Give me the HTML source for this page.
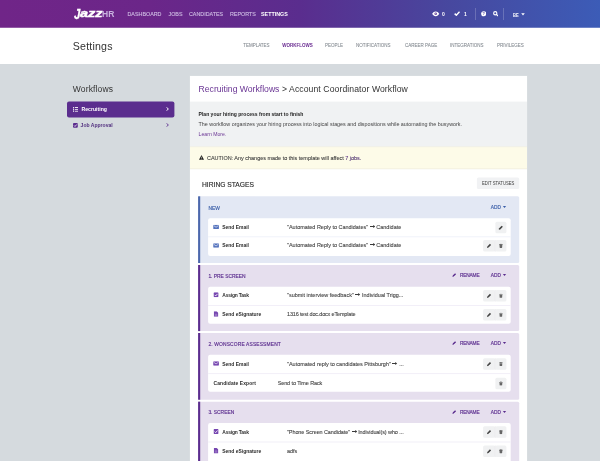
<!DOCTYPE html>
<html><head><meta charset="utf-8">
<style>
*{box-sizing:border-box;margin:0;padding:0}
html,body{width:600px;height:461px;overflow:hidden;background:#d5dade;font-family:"Liberation Sans",sans-serif;color:#333}
.abs{position:absolute}
#txt{position:absolute;left:0;top:0;width:600px;height:461px;will-change:transform}
#hdr{position:absolute;left:0;top:0;width:600px;height:28px}
#sub{position:absolute;left:0;top:27.700px;width:600px;height:36.200px}
.nav{position:absolute;top:11px;font-size:5.360px;color:#cdb9e2;white-space:nowrap;line-height:6px;-webkit-text-stroke:.12px #cdb9e2}
.nav.on{color:#fff;font-weight:bold;-webkit-text-stroke:0}
.tab{position:absolute;top:43.300px;font-size:4.500px;color:#7f858c;white-space:nowrap;line-height:5px;-webkit-text-stroke:.06px #7f858c}
.tab.on{color:#6a2c91;font-weight:bold;-webkit-text-stroke:0}
.t{position:absolute;white-space:nowrap}
.sh{position:absolute;font-size:4.900px;line-height:7px;color:#5b2d8e;white-space:nowrap;-webkit-text-stroke:.15px #5b2d8e}
.sh.new{color:#3b5ea8;-webkit-text-stroke-color:#3b5ea8}
.lbl{position:absolute;font-size:4.950px;line-height:7px;font-weight:bold;color:#2d2d2d;white-space:nowrap}
.val{position:absolute;font-size:5.470px;line-height:7px;color:#444;-webkit-text-stroke:.1px #444;white-space:nowrap}
.act{position:absolute;font-size:4.800px;line-height:7px;color:#5b2d8e;white-space:nowrap;-webkit-text-stroke:.15px #5b2d8e}
.act.new{color:#3b5ea8;-webkit-text-stroke-color:#3b5ea8}
.arr{display:inline-block;width:5.200px;height:3px;vertical-align:.35px}
</style></head><body>
<svg class="abs" style="left:0;top:0" width="600" height="461" viewBox="0 0 600 461">
<defs><linearGradient id="g" x1="0" x2="1" y1="0" y2="0"><stop offset="0" stop-color="#702588"/><stop offset=".25" stop-color="#6b2689"/><stop offset=".5" stop-color="#5a2d8e"/><stop offset=".75" stop-color="#47489f"/><stop offset="1" stop-color="#3c5cb7"/></linearGradient></defs>
<rect x="0" y="0" width="600" height="64" fill="#fff"/>
<rect x="0" y="0" width="600" height="27.750" fill="url(#g)"/>
<rect x="189.600" y="75.600" width="337.800" height="390" fill="#dde1e4"/>
<rect x="190" y="76" width="337" height="390" fill="#fff"/>
<rect x="190" y="101.600" width="337" height="44.900" fill="#f0f2f3"/>
<rect x="190" y="146.500" width="337" height="22.700" fill="#ebe9da"/>
<rect x="190" y="147.100" width="337" height="21.500" fill="#fdfbe8"/>
<rect x="67" y="101.600" width="107.400" height="15.800" rx="2" fill="#5b2d8e"/>
<rect x="476.900" y="177.600" width="42.300" height="11.500" rx="1.500" fill="#f1f2f4"/>
<rect x="198.10" y="196.30" width="321.10" height="66.70" rx="1.5" fill="#e3e8f4"/><rect x="198.10" y="196.30" width="2.10" height="66.70" rx="0" fill="#4c68ac"/><rect x="208.10" y="218.30" width="302.60" height="37.70" rx="2" fill="#fff"/><rect x="208.10" y="236.30" width="302.60" height="1.00" rx="0" fill="#f0f2fa"/><path d="M502.900 206.10h3.200l-1.600 2z" fill="#3b5ea8"/><rect x="495.40" y="221.85" width="11.00" height="11.50" rx="1.5" fill="#f0f1f2"/><svg x="498.40" y="225.10" width="5.00" height="5.00" viewBox="0 0 10 10"><path d="M0.600 9.400l.8-3.100L6.600 1.100l2.300 2.300-5.200 5.200z" fill="#454545"/></svg><svg x="213.15" y="224.65" width="5.8" height="4.3" viewBox="0 0 12 9" preserveAspectRatio="none"><rect width="12" height="9" rx="1.200" fill="#5573bd"/><path d="M1.200 2l4.800 3.400L10.800 2" stroke="#fff" stroke-width="1.300" fill="none"/></svg><rect x="483.10" y="240.05" width="12.10" height="11.50" rx="1.5" fill="#f0f1f2"/><rect x="494.80" y="240.05" width="0.80" height="11.50" rx="0" fill="#e4e5e8"/><svg x="486.65" y="243.30" width="5.00" height="5.00" viewBox="0 0 10 10"><path d="M0.600 9.400l.8-3.100L6.600 1.100l2.300 2.300-5.200 5.200z" fill="#454545"/></svg><rect x="495.40" y="240.05" width="11.00" height="11.50" rx="1.5" fill="#f0f1f2"/><svg x="498.60" y="243.50" width="4.60" height="4.60" viewBox="0 0 10 10"><path d="M1 1.800h8v1.200H1zM3.600 .7h2.800v1.200H3.600zM1.900 3.500h6.200l-.4 5.300q-.1 .8-.9 .8H3.200q-.8 0-.9-.8z" fill="#666"/></svg><svg x="213.15" y="243.35" width="5.8" height="4.3" viewBox="0 0 12 9" preserveAspectRatio="none"><rect width="12" height="9" rx="1.200" fill="#5573bd"/><path d="M1.200 2l4.800 3.400L10.800 2" stroke="#fff" stroke-width="1.300" fill="none"/></svg><rect x="198.10" y="265.00" width="321.10" height="66.10" rx="1.5" fill="#e6dfee"/><rect x="198.10" y="265.00" width="2.10" height="66.10" rx="0" fill="#5b2d8e"/><rect x="208.10" y="286.70" width="302.60" height="37.00" rx="2" fill="#fff"/><rect x="208.10" y="305.00" width="302.60" height="1.00" rx="0" fill="#f2eff8"/><svg x="452.10" y="272.70" width="4.50" height="4.50" viewBox="0 0 10 10"><path d="M0.600 9.400l.8-3.100L6.600 1.100l2.300 2.300-5.200 5.200z" fill="#5b2d8e"/></svg><path d="M502.900 274.10h3.200l-1.600 2z" fill="#5b2d8e"/><rect x="483.10" y="290.00" width="12.10" height="11.50" rx="1.5" fill="#f0f1f2"/><rect x="494.80" y="290.00" width="0.80" height="11.50" rx="0" fill="#e4e5e8"/><svg x="486.65" y="293.25" width="5.00" height="5.00" viewBox="0 0 10 10"><path d="M0.600 9.400l.8-3.100L6.600 1.100l2.300 2.300-5.200 5.200z" fill="#454545"/></svg><rect x="495.40" y="290.00" width="11.00" height="11.50" rx="1.5" fill="#f0f1f2"/><svg x="498.60" y="293.45" width="4.60" height="4.60" viewBox="0 0 10 10"><path d="M1 1.800h8v1.200H1zM3.600 .7h2.800v1.200H3.600zM1.900 3.500h6.200l-.4 5.300q-.1 .8-.9 .8H3.200q-.8 0-.9-.8z" fill="#666"/></svg><svg x="213.50" y="292.25" width="5.1" height="5.1" viewBox="0 0 10 10"><rect width="10" height="10" rx="2" fill="#7646b0"/><path d="M2.300 5.200l2 2L7.900 3.100" stroke="#fff" stroke-width="1.700" fill="none"/></svg><rect x="483.10" y="309.00" width="12.10" height="11.50" rx="1.5" fill="#f0f1f2"/><rect x="494.80" y="309.00" width="0.80" height="11.50" rx="0" fill="#e4e5e8"/><svg x="486.65" y="312.25" width="5.00" height="5.00" viewBox="0 0 10 10"><path d="M0.600 9.400l.8-3.100L6.600 1.100l2.300 2.300-5.200 5.200z" fill="#454545"/></svg><rect x="495.40" y="309.00" width="11.00" height="11.50" rx="1.5" fill="#f0f1f2"/><svg x="498.60" y="312.45" width="4.60" height="4.60" viewBox="0 0 10 10"><path d="M1 1.800h8v1.200H1zM3.600 .7h2.800v1.200H3.600zM1.900 3.500h6.200l-.4 5.300q-.1 .8-.9 .8H3.200q-.8 0-.9-.8z" fill="#666"/></svg><svg x="213.75" y="311.25" width="4.6" height="5.5" viewBox="0 0 8 10" preserveAspectRatio="none"><path d="M0 0h5L8 3V10H0z" fill="#7646b0"/><path d="M1.800 5.500h4.400M1.800 7.500h4.400" stroke="#fff" stroke-opacity=".55" stroke-width=".9"/></svg><rect x="198.10" y="333.00" width="321.10" height="66.75" rx="1.5" fill="#e6dfee"/><rect x="198.10" y="333.00" width="2.10" height="66.75" rx="0" fill="#5b2d8e"/><rect x="208.10" y="354.70" width="302.60" height="37.10" rx="2" fill="#fff"/><rect x="208.10" y="373.10" width="302.60" height="1.00" rx="0" fill="#f2eff8"/><svg x="452.10" y="340.70" width="4.50" height="4.50" viewBox="0 0 10 10"><path d="M0.600 9.400l.8-3.100L6.600 1.100l2.300 2.300-5.200 5.200z" fill="#5b2d8e"/></svg><path d="M502.900 342.10h3.200l-1.600 2z" fill="#5b2d8e"/><rect x="483.10" y="358.25" width="12.10" height="11.50" rx="1.5" fill="#f0f1f2"/><rect x="494.80" y="358.25" width="0.80" height="11.50" rx="0" fill="#e4e5e8"/><svg x="486.65" y="361.50" width="5.00" height="5.00" viewBox="0 0 10 10"><path d="M0.600 9.400l.8-3.100L6.600 1.100l2.300 2.300-5.200 5.200z" fill="#454545"/></svg><rect x="495.40" y="358.25" width="11.00" height="11.50" rx="1.5" fill="#f0f1f2"/><svg x="498.60" y="361.70" width="4.60" height="4.60" viewBox="0 0 10 10"><path d="M1 1.800h8v1.200H1zM3.600 .7h2.800v1.200H3.600zM1.900 3.500h6.200l-.4 5.300q-.1 .8-.9 .8H3.200q-.8 0-.9-.8z" fill="#666"/></svg><svg x="213.15" y="361.35" width="5.8" height="4.3" viewBox="0 0 12 9" preserveAspectRatio="none"><rect width="12" height="9" rx="1.200" fill="#7646b0"/><path d="M1.200 2l4.800 3.400L10.800 2" stroke="#fff" stroke-width="1.300" fill="none"/></svg><rect x="495.40" y="377.65" width="11.00" height="11.50" rx="1.5" fill="#f0f1f2"/><svg x="498.60" y="381.10" width="4.60" height="4.60" viewBox="0 0 10 10"><path d="M1 1.800h8v1.200H1zM3.600 .7h2.800v1.200H3.600zM1.900 3.500h6.200l-.4 5.300q-.1 .8-.9 .8H3.200q-.8 0-.9-.8z" fill="#666"/></svg><rect x="198.10" y="401.65" width="321.10" height="66.65" rx="1.5" fill="#e6dfee"/><rect x="198.10" y="401.65" width="2.10" height="66.65" rx="0" fill="#5b2d8e"/><rect x="208.10" y="422.90" width="302.60" height="40.10" rx="2" fill="#fff"/><rect x="208.10" y="441.50" width="302.60" height="1.00" rx="0" fill="#f2eff8"/><svg x="452.10" y="409.70" width="4.50" height="4.50" viewBox="0 0 10 10"><path d="M0.600 9.400l.8-3.100L6.600 1.100l2.300 2.300-5.200 5.200z" fill="#5b2d8e"/></svg><path d="M502.900 411.10h3.200l-1.600 2z" fill="#5b2d8e"/><rect x="483.10" y="426.30" width="12.10" height="11.50" rx="1.5" fill="#f0f1f2"/><rect x="494.80" y="426.30" width="0.80" height="11.50" rx="0" fill="#e4e5e8"/><svg x="486.65" y="429.55" width="5.00" height="5.00" viewBox="0 0 10 10"><path d="M0.600 9.400l.8-3.100L6.600 1.100l2.300 2.300-5.200 5.200z" fill="#454545"/></svg><rect x="495.40" y="426.30" width="11.00" height="11.50" rx="1.5" fill="#f0f1f2"/><svg x="498.60" y="429.75" width="4.60" height="4.60" viewBox="0 0 10 10"><path d="M1 1.800h8v1.200H1zM3.600 .7h2.800v1.200H3.600zM1.900 3.500h6.200l-.4 5.300q-.1 .8-.9 .8H3.200q-.8 0-.9-.8z" fill="#666"/></svg><svg x="213.50" y="428.95" width="5.1" height="5.1" viewBox="0 0 10 10"><rect width="10" height="10" rx="2" fill="#7646b0"/><path d="M2.300 5.200l2 2L7.900 3.100" stroke="#fff" stroke-width="1.700" fill="none"/></svg><rect x="483.10" y="445.55" width="12.10" height="11.50" rx="1.5" fill="#f0f1f2"/><rect x="494.80" y="445.55" width="0.80" height="11.50" rx="0" fill="#e4e5e8"/><svg x="486.65" y="448.80" width="5.00" height="5.00" viewBox="0 0 10 10"><path d="M0.600 9.400l.8-3.100L6.600 1.100l2.300 2.300-5.200 5.200z" fill="#454545"/></svg><rect x="495.40" y="445.55" width="11.00" height="11.50" rx="1.5" fill="#f0f1f2"/><svg x="498.60" y="449.00" width="4.60" height="4.60" viewBox="0 0 10 10"><path d="M1 1.800h8v1.200H1zM3.600 .7h2.800v1.200H3.600zM1.900 3.500h6.200l-.4 5.300q-.1 .8-.9 .8H3.200q-.8 0-.9-.8z" fill="#666"/></svg><svg x="213.75" y="447.95" width="4.6" height="5.5" viewBox="0 0 8 10" preserveAspectRatio="none"><path d="M0 0h5L8 3V10H0z" fill="#7646b0"/><path d="M1.800 5.500h4.400M1.800 7.500h4.400" stroke="#fff" stroke-opacity=".55" stroke-width=".9"/></svg>
</svg>
<div id="txt">
<div id="hdr">
  <div class="t" style="left:0;top:0;font-weight:bold;font-style:italic;color:#fff"><span class="abs" style="left:73.700px;top:5.800px;font-size:14.500px;line-height:16px;transform:scaleX(.78);transform-origin:0 0;-webkit-text-stroke:.3px #fff">J</span><span class="abs" style="left:80px;top:7.200px;font-size:10.800px;line-height:12px;transform:scaleX(1.340);transform-origin:0 0;-webkit-text-stroke:.45px #fff">azz</span></div>
  <div class="t" style="left:102.200px;top:8.900px;font-size:8.900px;line-height:10px;font-weight:bold;color:#c9b3df;transform:scaleX(.96);transform-origin:0 0">HR</div>
  <div class="nav" style="left:127.500px">DASHBOARD</div>
  <div class="nav" style="left:168.500px">JOBS</div>
  <div class="nav" style="left:189px">CANDIDATES</div>
  <div class="nav" style="left:230px">REPORTS</div>
  <div class="nav on" style="left:261px">SETTINGS</div>
  <svg class="abs" style="left:432.300px;top:11.200px" width="7.400" height="5.600" viewBox="0 0 16 12"><path d="M8 .8C4 .8 1.300 4 .3 6c1 2 3.700 5.200 7.700 5.200S14.700 8 15.700 6C14.700 4 12 .8 8 .8z" fill="#fff"/><circle cx="8" cy="6" r="2.700" fill="#5a3596"/><circle cx="8" cy="6" r="1.100" fill="#fff"/></svg>
  <div class="t" style="left:442px;top:11px;font-size:5px;line-height:6px;color:#fff;font-weight:bold">0</div>
  <svg class="abs" style="left:454.300px;top:11.400px" width="6.200" height="5" viewBox="0 0 12.400 10"><path d="M1.300 5.200l3.400 3.200L11.100 1.600" stroke="#fff" stroke-width="2.900" fill="none"/></svg>
  <div class="t" style="left:464px;top:11px;font-size:5px;line-height:6px;color:#fff;font-weight:bold">1</div>
  <div class="abs" style="left:475.200px;top:8px;width:.8px;height:11.600px;background:rgba(255,255,255,.2)"></div>
  <svg class="abs" style="left:480.800px;top:11.300px" width="5.400" height="5.400" viewBox="0 0 12 12"><circle cx="6" cy="6" r="5.700" fill="#fff"/><text x="6" y="9.200" font-size="8.500" font-weight="bold" text-anchor="middle" fill="#4b3f9f" font-family="Liberation Sans">?</text></svg>
  <svg class="abs" style="left:492.800px;top:11.300px" width="5.400" height="5.400" viewBox="0 0 12 12"><circle cx="5" cy="5" r="3.600" stroke="#fff" stroke-width="2.500" fill="none"/><path d="M7.600 7.600L11.200 11.200" stroke="#fff" stroke-width="2.800"/></svg>
  <div class="abs" style="left:503.200px;top:8px;width:.8px;height:11.600px;background:rgba(255,255,255,.2)"></div>
  <div class="t" style="left:513px;top:11.800px;font-size:5.200px;line-height:6px;color:#fff;font-weight:bold;transform:scaleX(.78);transform-origin:0 0">BE</div>
  <svg class="abs" style="left:520.800px;top:13.300px" width="4" height="3" viewBox="0 0 4 3"><path d="M.2 .3h3.600L2 2.500z" fill="#fff"/></svg>
</div>
<div id="sub">
  <div class="t" style="left:72.800px;top:11.300px;font-size:10.600px;line-height:14px;color:#333;letter-spacing:.2px">Settings</div>
</div>
<div class="tab" style="left:243.200px">TEMPLATES</div>
<div class="tab on" style="left:282.300px">WORKFLOWS</div>
<div class="tab" style="left:325px">PEOPLE</div>
<div class="tab" style="left:356px">NOTIFICATIONS</div>
<div class="tab" style="left:405px">CAREER PAGE</div>
<div class="tab" style="left:450px">INTEGRATIONS</div>
<div class="tab" style="left:497px">PRIVILEGES</div>

<div class="t" style="left:72.800px;top:82.600px;font-size:8.500px;line-height:12px;color:#333;letter-spacing:.15px">Workflows</div>
<svg class="abs" style="left:73px;top:107px" width="5.400" height="5.400" viewBox="0 0 10 10"><path d="M.2 1h1.600M.2 5h1.600M.2 9h1.600M3.400 1H10M3.400 5H10M3.400 9H10" stroke="#fff" stroke-width="1.700"/><path d="M1 0v10" stroke="#fff" stroke-width=".8"/></svg>
<div class="t" style="left:81.500px;top:106.200px;font-size:5.150px;line-height:7px;color:#fff;font-weight:bold">Recruiting</div>
<svg class="abs" style="left:165.800px;top:107.300px" width="3" height="4" viewBox="0 0 6 8"><path d="M1 .8L4.800 4 1 7.200" stroke="#fff" stroke-width="1.900" fill="none"/></svg>
<svg class="abs" style="left:73px;top:122.800px" width="4.800" height="4.800" viewBox="0 0 10 10"><rect x="0" y="0" width="10" height="10" rx="2" fill="#5b2d8e"/><path d="M2.200 5.200l2 2L8 3" stroke="#fff" stroke-width="1.700" fill="none"/></svg>
<div class="t" style="left:80.600px;top:122px;font-size:5.050px;line-height:7px;color:#52307f;font-weight:bold">Job Approval</div>
<svg class="abs" style="left:165.800px;top:123.400px" width="3" height="4" viewBox="0 0 6 8"><path d="M1 .8L4.800 4 1 7.200" stroke="#5b2d8e" stroke-width="1.700" fill="none"/></svg>

<div class="t" style="left:198.600px;top:83.400px;font-size:8.640px;line-height:12px;color:#333"><span style="color:#6a3594">Recruiting Workflows</span><span style="letter-spacing:.09px"> &gt; Account Coordinator Workflow</span></div>
<div class="t" style="left:198.600px;top:110.600px;font-size:5.040px;line-height:7px;color:#222;font-weight:bold">Plan your hiring process from start to finish</div>
<div class="t" style="left:198.600px;top:120.500px;font-size:5.370px;line-height:7px;color:#444">The workflow organizes your hiring process into logical stages and dispositions while automating the busywork.</div>
<div class="t" style="left:198.600px;top:130.500px;font-size:5.150px;line-height:7px;color:#6a3594">Learn More.</div>
<svg class="abs" style="left:198.900px;top:155.300px" width="5" height="5" viewBox="0 0 10 10"><path d="M5 .2L10 9.600H0z" fill="#222"/><path d="M5 3.500v3.200M5 7.400v1.200" stroke="#fdfbe8" stroke-width="1"/></svg>
<div class="t" style="left:207px;top:154.600px;font-size:5.470px;line-height:7px;color:#3a3a3a;-webkit-text-stroke:.08px #3a3a3a">CAUTION: Any changes made to this template will affect <span style="color:#5b2d8e">7 jobs.</span></div>
<div class="t" style="left:202px;top:179.600px;font-size:6.700px;line-height:9px;color:#2e2e2e;-webkit-text-stroke:.15px #2e2e2e">HIRING STAGES</div>
<div class="t" style="left:481.800px;top:180.300px;font-size:5.600px;line-height:6px;color:#3d3d3d;transform:scaleX(.755);transform-origin:0 0">EDIT STATUSES</div>

<div class="sh new" style="left:208.40px;top:204.80px">NEW</div>
<div class="act new" style="left:490.80px;top:203.84px">ADD</div>
<div class="lbl" style="left:222.30px;top:223.80px">Send Email</div>
<div class="val" style="left:287.00px;top:223.60px">"Automated Reply to Candidates" <svg class="arr" viewBox="0 0 10.400 6"><path d="M0 2.100h6.400V.2L10.400 3 6.400 5.800V3.900H0z" fill="#3a3a3a"/></svg> Candidate</div>
<div class="lbl" style="left:222.30px;top:241.80px">Send Email</div>
<div class="val" style="left:287.00px;top:241.60px">"Automated Reply to Candidates" <svg class="arr" viewBox="0 0 10.400 6"><path d="M0 2.100h6.400V.2L10.400 3 6.400 5.800V3.900H0z" fill="#3a3a3a"/></svg> Candidate</div>
<div class="sh" style="left:208.40px;top:272.80px">1. PRE SCREEN</div>
<div class="act" style="left:460.10px;top:271.84px;letter-spacing:-.2px">RENAME</div>
<div class="act" style="left:490.80px;top:271.84px">ADD</div>
<div class="lbl" style="left:222.30px;top:291.80px;letter-spacing:-0.2px">Assign Task</div>
<div class="val" style="left:287.00px;top:291.60px">"submit interview feedback" <svg class="arr" viewBox="0 0 10.400 6"><path d="M0 2.100h6.400V.2L10.400 3 6.400 5.800V3.900H0z" fill="#3a3a3a"/></svg> Individual Trigg...</div>
<div class="lbl" style="left:222.30px;top:310.80px">Send eSignature</div>
<div class="val" style="left:287.00px;top:310.60px;letter-spacing:-0.15px">1316 test doc.docx eTemplate</div>
<div class="sh" style="left:208.40px;top:340.80px;letter-spacing:0.15px">2. WONSCORE ASSESSMENT</div>
<div class="act" style="left:460.10px;top:339.84px;letter-spacing:-.2px">RENAME</div>
<div class="act" style="left:490.80px;top:339.84px">ADD</div>
<div class="lbl" style="left:222.30px;top:360.80px">Send Email</div>
<div class="val" style="left:287.00px;top:360.60px">"Automated reply to candidates Pittsburgh" <svg class="arr" viewBox="0 0 10.400 6"><path d="M0 2.100h6.400V.2L10.400 3 6.400 5.800V3.900H0z" fill="#3a3a3a"/></svg> ...</div>
<div class="lbl" style="left:213.60px;top:379.80px;letter-spacing:0.1px">Candidate Export</div>
<div class="val" style="left:277.70px;top:379.60px;letter-spacing:-0.1px">Send to Time Rack</div>
<div class="sh" style="left:208.40px;top:408.80px">3. SCREEN</div>
<div class="act" style="left:460.10px;top:408.84px;letter-spacing:-.2px">RENAME</div>
<div class="act" style="left:490.80px;top:408.84px">ADD</div>
<div class="lbl" style="left:222.30px;top:428.80px;letter-spacing:-0.2px">Assign Task</div>
<div class="val" style="left:287.00px;top:428.60px;letter-spacing:-.08px">"Phone Screen Candidate" <svg class="arr" viewBox="0 0 10.400 6"><path d="M0 2.100h6.400V.2L10.400 3 6.400 5.800V3.900H0z" fill="#3a3a3a"/></svg> Individual(s) who ...</div>
<div class="lbl" style="left:222.30px;top:447.80px">Send eSignature</div>
<div class="val" style="left:287.00px;top:447.60px">adfs</div>

</div>
</body></html>
